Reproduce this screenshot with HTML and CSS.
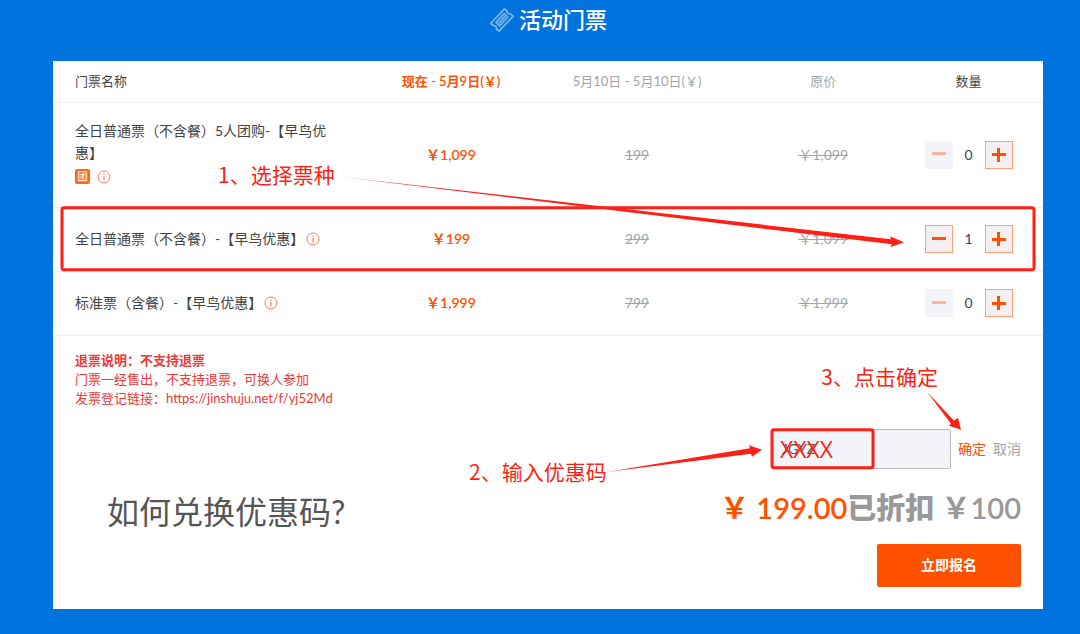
FILE: index.html
```html
<!DOCTYPE html>
<html lang="zh-CN">
<head>
<meta charset="utf-8">
<meta name="viewport" content="width=device-width, initial-scale=1">
<title>活动门票</title>
<link rel="stylesheet" href="styles.css">
</head>
<body>
<svg class="symbols" aria-hidden="true">
  <symbol id="info" viewBox="0 0 14 14">
    <circle cx="7" cy="7" r="6" fill="none" stroke="#ff7a55" stroke-width="1"/>
    <path d="M7 6v4.5M7 3.4v1.4" stroke="#ff7a55" stroke-width="1.2" fill="none"/>
  </symbol>
</svg>
<main class="page">
  <h1 class="page-title">
    <svg class="ticket-icon" viewBox="0 0 26 26" aria-hidden="true">
      <g fill="none" stroke="#78b6f0" stroke-width="1.7" stroke-linejoin="round">
        <path d="M1.5 16.5 L15.5 1.8 L18 4 Q17.6 7 21 6.7 L24.2 9.2 L10 24.2 L7.4 22 Q8 18.800 4.800 18.800 Z"/>
        <path d="M7 15.400 L15.200 6.600 L18.800 10 L10.600 18.800 Z"/>
        <path d="M9.600 16.400 L16.400 9.200"/>
      </g>
    </svg>
    活动门票
  </h1>
  <section class="card">
    <table class="tickets">
      <thead>
        <tr>
          <th class="name" scope="col">门票名称</th>
          <th class="now" scope="col">现在 - 5月9日(￥)</th>
          <th class="later" scope="col">5月10日 - 5月10日(￥)</th>
          <th class="list" scope="col">原价</th>
          <th class="count" scope="col">数量</th>
        </tr>
      </thead>
      <tbody>
        <tr class="tall">
          <td class="name">
            <span class="label">全日普通票（不含餐）5人团购-【早鸟优惠】</span>
            <span class="badges"><span class="group">团</span><svg class="info"><use href="#info"/></svg></span>
          </td>
          <td class="now">￥1,099</td>
          <td class="later"><s>199</s></td>
          <td class="list"><s>￥1,099</s></td>
          <td class="count"><div class="stepper"><button type="button" class="step minus" aria-label="减少" disabled></button><output>0</output><button type="button" class="step plus" aria-label="增加"></button></div></td>
        </tr>
        <tr>
          <td class="name">全日普通票（不含餐）-【早鸟优惠】<svg class="info"><use href="#info"/></svg></td>
          <td class="now">￥199</td>
          <td class="later"><s>299</s></td>
          <td class="list"><s>￥1,099</s></td>
          <td class="count"><div class="stepper"><button type="button" class="step minus" aria-label="减少"></button><output>1</output><button type="button" class="step plus" aria-label="增加"></button></div></td>
        </tr>
        <tr>
          <td class="name">标准票（含餐）-【早鸟优惠】<svg class="info"><use href="#info"/></svg></td>
          <td class="now">￥1,999</td>
          <td class="later"><s>799</s></td>
          <td class="list"><s>￥1,999</s></td>
          <td class="count"><div class="stepper"><button type="button" class="step minus" aria-label="减少" disabled></button><output>0</output><button type="button" class="step plus" aria-label="增加"></button></div></td>
        </tr>
      </tbody>
    </table>

    <div class="notice">
      <strong>退票说明：不支持退票</strong>
      <p>门票一经售出，不支持退票，可换人参加</p>
      <p>发票登记链接：<a href="https://jinshuju.net/f/yj52Md">https://jinshuju.net/f/yj52Md</a></p>
    </div>

    <div class="checkout">
      <h2 class="question">如何兑换优惠码?</h2>
      <form class="order">
        <div class="coupon">
          <input type="text" class="code" value="JGYZ" aria-label="优惠码">
          <button type="button" class="link confirm">确定</button>
          <button type="button" class="link cancel">取消</button>
        </div>
        <div class="total"><span class="price">￥ 199.00</span><span class="off"><strong>已折扣</strong> ￥100</span></div>
        <button type="button" class="submit">立即报名</button>
      </form>
    </div>

    <div class="guide">
      <svg class="marks" viewBox="0 0 990 548" preserveAspectRatio="none" aria-hidden="true">
        <g fill="none" stroke="#ff1f14" stroke-width="3">
          <rect x="9" y="147" width="972" height="62" rx="2"/>
          <rect x="719" y="369" width="101" height="38" rx="2"/>
        </g>
        <g fill="#ff1f14">
          <path d="M290 116 L838 178.500 L837 175.500 L851 181.500 L837 186.500 L839 183.500 L560 149.500 Z"/>
          <path d="M554 411.500 L697 387.500 L696 384.500 L709 389 L699 396 L698 393 Z"/>
          <path d="M874 331 L901 360 L905 357 L908 369 L896 365 L898 363 Z"/>
        </g>
      </svg>
      <span class="tip tip-pick">1、选择票种</span>
      <span class="tip tip-enter">2、输入优惠码</span>
      <span class="tip tip-confirm">3、点击确定</span>
      <span class="tip tip-code">XXXX</span>
    </div>
  </section>
</main>
</body>
</html>
```
FILE: styles.css
```css
* { box-sizing: border-box; }

body {
  margin: 0;
  min-height: 100vh;
  background: #0073de;
  color: #444;
  font: 14px/22px Lato, "Noto Sans CJK SC", sans-serif;
}

button, input { font: inherit; }
h1, h2, p { margin: 0; }
.symbols { position: absolute; width: 0; height: 0; }

.page { padding: 0 37px 25px 53px; }

.page-title {
  display: flex;
  align-items: center;
  justify-content: center;
  gap: 4px;
  height: 40px;
  margin-bottom: 21px;
  color: #fff;
  font-size: 22px;
  font-weight: 500;
}
.ticket-icon { width: 26px; height: 26px; }

.card { position: relative; background: #fff; }

.tickets {
  width: 100%;
  border-collapse: collapse;
  table-layout: fixed;
  text-align: center;
}
.tickets th { height: 41px; padding: 0; font-size: 13px; font-weight: 400; }
.tickets td { height: 64px; padding: 0; }
.tickets .tall td { height: 105px; }
.tickets tr { border-bottom: 1px solid #eee; }
.tickets .name { width: 30.8%; padding: 0 22px; text-align: left; }
.tickets .now { width: 18.8%; color: #ff5100; font-weight: 600; }
.tickets .later, .tickets .list { width: 18.8%; color: #9fa5a8; }
.tickets .count { padding-right: 22px; }
.label { display: block; }

.info { width: 14px; height: 14px; vertical-align: -2px; }
td > .info { margin-left: 2px; }
.badges { display: flex; align-items: center; gap: 7px; height: 26px; }
.group {
  width: 15px;
  height: 15px;
  border: 2px solid #ff6a1a;
  border-radius: 2px;
  background: #ff7f3c;
  color: #fff;
  font-size: 10px;
  line-height: 11px;
  text-align: center;
}

.stepper { display: flex; align-items: center; justify-content: center; }
.stepper output { width: 32px; }
.step {
  position: relative;
  width: 28px;
  height: 28px;
  padding: 0;
  border: 1px solid #ff9f78;
  background: #f4eff2;
}
.step::before, .plus::after {
  content: "";
  position: absolute;
  inset: 0;
  width: 14px;
  height: 3px;
  margin: auto;
  background: #ff5100;
}
.minus::before { bottom: 2px; }
.plus::after { width: 3px; height: 14px; }
.step:disabled { border-color: #f3f4f9; background: #f3f4f9; }
.step:disabled::before { background: #ffb294; }

.notice {
  padding: 15px 22px 0;
  color: #ea3a3a;
  font-size: 13px;
  line-height: 19px;
}
.notice strong { display: block; }
.notice a { color: inherit; text-decoration: none; }

.checkout {
  display: flex;
  justify-content: space-between;
  padding: 21px 22px 22px 54px;
}
.question {
  padding-top: 59px;
  color: #555;
  font-size: 32px;
  font-weight: 400;
  line-height: 48px;
}
.order { display: flex; flex-direction: column; align-items: flex-end; }
.coupon { display: flex; align-items: center; gap: 7px; }
.code {
  width: 180px;
  height: 40px;
  padding: 0 10px;
  border: 1px solid #b9bbc0;
  border-radius: 2px;
  background: #f3f4f9;
  color: #555;
}
.link { padding: 0; border: 0; background: none; }
.confirm { color: #ff5100; }
.cancel { color: #9fa5a8; }
.total {
  margin: 19px 0 16px;
  font-size: 29px;
  font-weight: 600;
  line-height: 40px;
}
.price { color: #ff5100; }
.off { color: #999; }
.submit {
  width: 144px;
  height: 43px;
  padding: 0;
  border: 0;
  border-radius: 2px;
  background: #ff5100;
  color: #fff;
  font-weight: 700;
}

/* Step-by-step marks drawn over the card */
.guide { position: absolute; inset: 0; pointer-events: none; }
.marks { display: block; width: 100%; height: 100%; }
.tip {
  position: absolute;
  color: #ff1f14;
  font: 21px/30px "Noto Sans CJK SC", sans-serif;
}
.tip-pick { left: 165px; top: 98px; }
.tip-enter { left: 416px; top: 395px; }
.tip-confirm { right: 105px; top: 300px; }
.tip-code { left: 727px; top: 373px; font-family: "Open Sans", sans-serif; font-size: 23px; }
```
